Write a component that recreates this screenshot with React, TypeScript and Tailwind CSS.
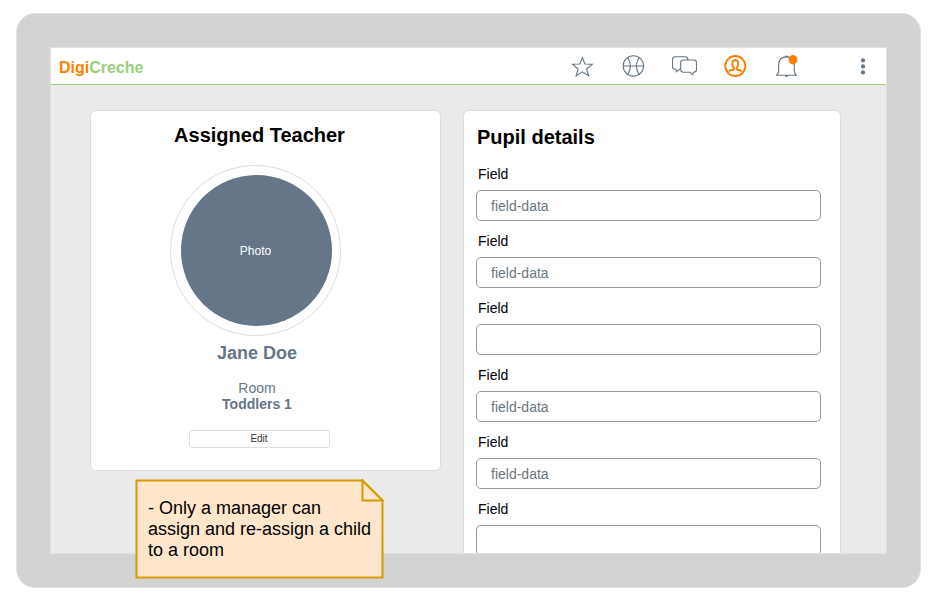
const SLATE = '#647687';
const ORANGE = '#ff8000';

function StarIcon() {
  return (
    <svg width="24" height="24" viewBox="570 54 24 24" fill="none" stroke={SLATE} strokeWidth="1.1">
      <path d="M582.4 57.6 L584.9 64 L592.2 64.3 L586.6 69 L588.6 75.8 L582.4 71.9 L576.2 75.8 L578.1 69 L572.6 64.3 L579.9 64Z" />
    </svg>
  );
}

function BallIcon() {
  return (
    <svg width="24" height="24" viewBox="621 54 24 24" fill="none" stroke={SLATE} strokeWidth="1.1">
      <circle cx="633.4" cy="65.9" r="10.2" />
      <path d="M623.2 66H643.6M627.5 57.6C631.4 62.5 631.4 69.5 627.5 74.4M639.3 57.6C635.4 62.5 635.4 69.5 639.3 74.4" />
    </svg>
  );
}

function ChatIcon() {
  return (
    <svg width="28" height="24" viewBox="671 54 28 24" fill="none" stroke={SLATE} strokeWidth="1.1">
      <path d="M680.5 69.3H679.3L676.6 71.8L675.9 69.3H675.2Q672.5 69.3 672.5 66.6V59.5Q672.5 56.8 675.2 56.8H685.1Q687.8 56.8 687.8 59.5V60" />
      <path d="M683.4 60H693.8Q696.5 60 696.5 62.7V69.6Q696.5 72.3 693.8 72.3H693.4L692.7 74.8L690 72.3H683.4Q680.7 72.3 680.7 69.6V62.7Q680.7 60 683.4 60Z" />
    </svg>
  );
}

function UserIcon() {
  return (
    <svg width="24" height="24" viewBox="723 54 24 24" fill="none" stroke={ORANGE} strokeWidth="1.9">
      <circle cx="735.3" cy="66" r="10" />
      <path d="M729.3 71.6Q729.5 70 731.7 70H732.6Q734.6 69.8 733.9 67.8C731.4 65.3 731.8 60 735.3 60C738.8 60 739.2 65.3 736.7 67.8Q736 69.8 738 70H738.9Q741.1 70 741.3 71.6" />
    </svg>
  );
}

function BellIcon() {
  return (
    <svg width="26" height="24" viewBox="774 54 26 24" fill="none" stroke={SLATE} strokeWidth="1.1">
      <path d="M776 75.3H797M776.6 75C778.4 74.2 778.7 73 778.7 71V64.5C778.7 59.5 782 56.9 786.5 56.9C791 56.9 794.3 59.5 794.3 64.5V71C794.3 73 794.6 74.2 796.4 75M785.3 56.5Q786.5 55.7 787.7 56.5M785.2 75.8Q786.5 76.7 787.8 75.8" />
      <ellipse cx="793" cy="59.7" rx="4.3" ry="4.8" fill={ORANGE} stroke="none" />
    </svg>
  );
}

function MenuIcon() {
  return (
    <svg width="8" height="24" viewBox="859 54 8 24" fill={SLATE}>
      <circle cx="863" cy="60.4" r="2.1" />
      <circle cx="863" cy="66.4" r="2.1" />
      <circle cx="863" cy="72.4" r="2.1" />
    </svg>
  );
}

function Header() {
  return (
    <header className="flex h-[37px] shrink-0 border-b border-b-[#97d077] bg-white pl-2">
      <h1 className="mt-[10px] w-[511px] text-base leading-5 font-bold text-[#97d077]">
        <span className="text-[#ff8000]">Digi</span>Creche
      </h1>
      <nav className="flex pt-1.5">
        <button className="h-6"><StarIcon /></button>
        <button className="ml-[27px] h-6"><BallIcon /></button>
        <button className="ml-[26px] h-6"><ChatIcon /></button>
        <button className="ml-6 h-6"><UserIcon /></button>
        <button className="ml-[27px] h-6"><BellIcon /></button>
        <button className="ml-[59px] h-6"><MenuIcon /></button>
      </nav>
    </header>
  );
}

function TeacherCard() {
  return (
    <section className="flex h-[361px] w-[351px] shrink-0 flex-col items-center rounded-md border border-[#dcdcdc] bg-white pt-3">
      <h2 className="ml-[-12px] text-xl leading-6 font-bold">Assigned Teacher</h2>
      <div className="mt-[18px] mr-[20px] flex h-[171px] w-[171px] items-center justify-center rounded-full border border-[#dcdcdc]">
        <div className="ml-[2px] flex h-[151px] w-[151px] items-center justify-center rounded-full bg-[#647687] pr-[2px] text-xs text-white">
          Photo
        </div>
      </div>
      <h3 className="mt-[5px] mr-[17px] text-lg leading-6 font-bold text-[#647687]">Jane Doe</h3>
      <p className="mt-[15px] mr-[17px] text-center text-sm leading-4 text-[#647687]">
        Room
        <br />
        <b>Toddlers 1</b>
      </p>
      <button className="mt-[18px] mr-[12px] flex h-[18px] w-[141px] items-center justify-center rounded-[3px] border border-[#e0e0e0] pr-px text-[10px] leading-3 text-[#333333]">
        Edit
      </button>
    </section>
  );
}

const fields = ['field-data', 'field-data', '', 'field-data', 'field-data', ''];

function PupilCard() {
  return (
    <section className="h-[480px] w-[378px] shrink-0 rounded-md border border-[#dcdcdc] bg-white pt-3.5 pl-3">
      <h2 className="pl-px text-xl leading-6 font-bold">Pupil details</h2>
      <div className="pt-[15px]">
        {fields.map((value, i) => (
          <div key={i} className="h-[67px]">
            <label className="block h-[26px] pl-0.5 text-sm leading-5">Field</label>
            <div className="h-[31px] w-[345px] rounded-[5px] border border-[#999999] pl-3.5 text-sm leading-[30px] text-[#6c7780]">
              {value}
            </div>
          </div>
        ))}
      </div>
    </section>
  );
}

function Note() {
  return (
    <aside className="absolute top-[479px] left-[135px] h-[100px] w-[249px]">
      <svg className="absolute inset-0" width="249" height="100" fill="#ffe6cc" stroke="#d79b00" strokeWidth="2">
        <path d="M1.5 1.5H227.5L247.5 21.5V98.5H1.5Z" />
        <path d="M227.5 1.5V21.5H247.5Z" />
      </svg>
      <p className="relative pt-[19px] pl-[13px] text-lg leading-[21px] whitespace-nowrap">
        - Only a manager can
        <br />
        assign and re-assign a child
        <br />
        to a room
      </p>
    </aside>
  );
}

export default function App() {
  return (
    <div className="relative h-[601px] w-[931px] overflow-hidden bg-white pt-[13px] pl-4 font-['Liberation_Sans',Arial,sans-serif] text-black">
      <div className="h-[575px] w-[905px] rounded-[19px] border border-[#e0e0e0] bg-[#d3d3d3] pt-[33px] pl-[33px]">
        <div className="flex h-[507px] w-[837px] flex-col overflow-hidden border border-[#e0e0e0] bg-[#eaeaea]">
          <Header />
          <main className="flex min-h-0 flex-1 items-start gap-[22px] overflow-hidden pt-[25px] pl-[39px]">
            <TeacherCard />
            <PupilCard />
          </main>
        </div>
      </div>
      <Note />
    </div>
  );
}
